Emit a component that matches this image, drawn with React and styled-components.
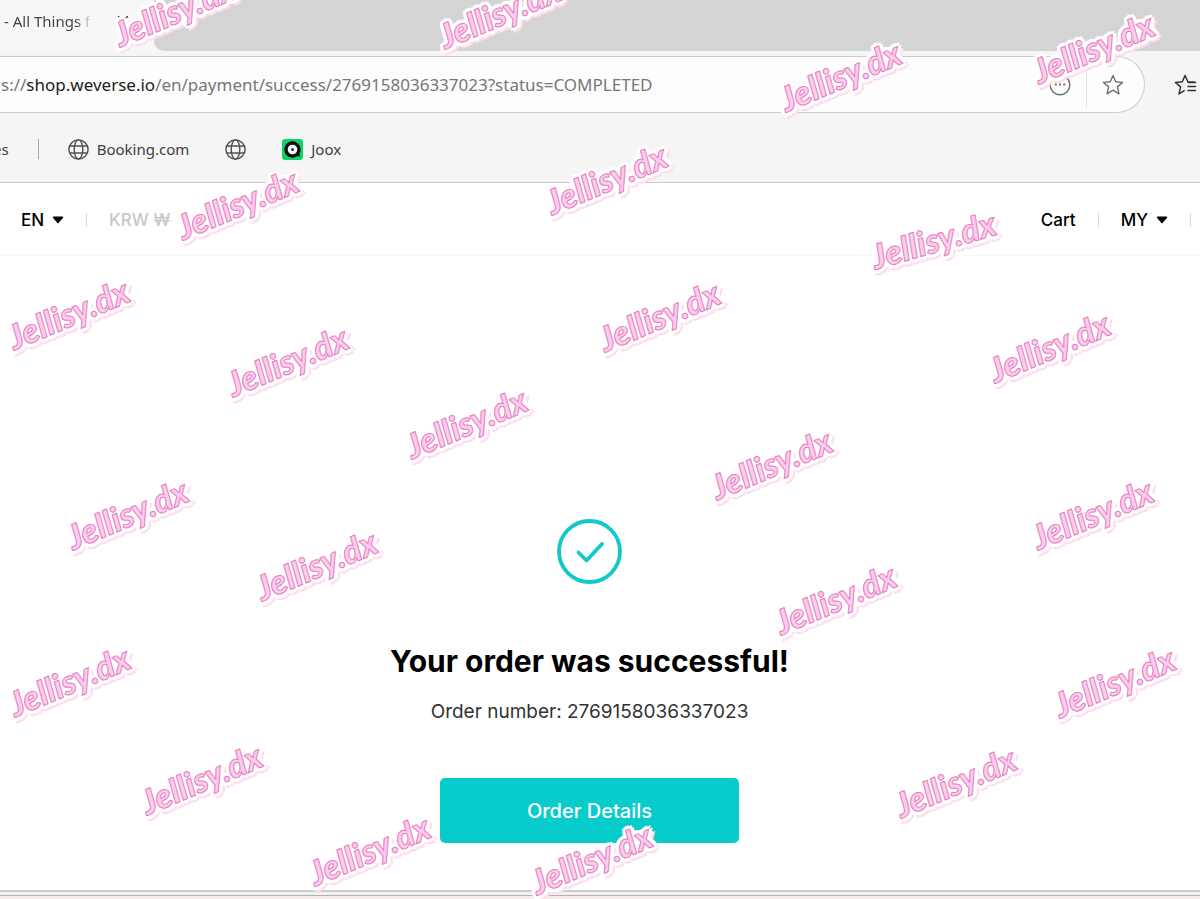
import React from 'react';
import styled, {createGlobalStyle} from 'styled-components';

const GlobalStyle = createGlobalStyle`
  * {
    box-sizing: border-box;
  }
  body {
    margin: 0;
    background: #fff;
    font-family: Inter, 'Liberation Sans', sans-serif;
    color: #000;
  }
  button {
    padding: 0;
    border: 0;
    background: none;
    font: inherit;
    color: inherit;
    cursor: pointer;
  }
  svg {
    display: block;
    flex: none;
  }
`;

const Page = styled.div`
  position: relative;
  display: flex;
  flex-direction: column;
  min-height: 100vh;
  overflow: hidden;
`;

const Row = styled.div`
  display: flex;
  align-items: center;
`;

const Browser = styled.div`
  background: #f5f5f5;
  border-bottom: 1px solid #ccc;
  font-family: 'Noto Sans', 'Open Sans', sans-serif;
  color: #404040;
`;

const TabStrip = styled.div`
  display: flex;
  height: 51px;
  background: #f7f7f7;
`;

const Tab = styled(Row)`
  width: 154px;
  flex: none;
  justify-content: space-between;
  padding: 0 26px 10px 4px;
  font-size: 15px;
`;

const TabTitle = styled.span`
  white-space: nowrap;
  background: linear-gradient(90deg, #404040 72px, #ddd 86px);
  background-clip: text;
  color: transparent;
`;

const EmptyStrip = styled.div`
  flex: 1;
  background: #d4d4d4;
  border-bottom-left-radius: 10px;
`;

const Toolbar = styled(Row)`
  padding-top: 5px;
  justify-content: space-between;
`;

const AddressBar = styled(Row)`
  flex: 1;
  height: 57px;
  border: 1px solid #ccc;
  border-left: 0;
  border-radius: 0 29px 29px 0;
  background: #fdfdfd;
`;

const Address = styled.div`
  flex: 1;
  padding-left: 1px;
  font-size: 17px;
  white-space: nowrap;
  color: #767676;
  > b {
    font-weight: 400;
    color: #222;
  }
`;

const MoreButton = styled.button`
  padding-right: 15px;
  color: #707070;
`;

const StarButton = styled.button`
  display: flex;
  align-items: center;
  height: 47px;
  padding: 0 20px 0 15px;
  border-left: 1px solid #e4e4e4;
  color: #707070;
`;

const FavouritesButton = styled.button`
  padding: 0 3px 0 29px;
  color: #333;
`;

const Bookmarks = styled.nav`
  display: flex;
  align-items: center;
  gap: 29px;
  height: 69px;
  padding-top: 3px;
  margin-left: -7px;
  font-size: 15px;
`;

const BookmarkList = styled(Row)`
  gap: 36px;
`;

const Bookmark = styled.a`
  display: flex;
  align-items: center;
  gap: 8px;
  line-height: 20px;
  color: inherit;
  text-decoration: none;
`;

const Divider = styled.span`
  width: 1px;
  height: ${({$tall}) => ($tall ? 20 : 14)}px;
  background: ${({$tall}) => ($tall ? '#a8a8a8' : '#d8d8d8')};
`;

const SiteHeader = styled.header`
  display: flex;
  align-items: center;
  justify-content: space-between;
  height: 73px;
  padding: 1px 9px 0 21px;
  border-bottom: 1px solid #f8f8f8;
  font-size: 17px;
  font-weight: 500;
`;

const HeaderGroup = styled(Row)`
  gap: 22px;
`;

const MenuButton = styled.button`
  display: flex;
  align-items: center;
  gap: 8px;
  color: ${({disabled}) => (disabled ? '#c8c8c8' : '#000')};
`;

const HeaderLink = styled.a`
  color: #000;
  text-decoration: none;
`;

const Main = styled.main`
  flex: 1;
  display: flex;
  flex-direction: column;
  align-items: center;
  padding: 263px 21px 47px 0;
`;

const Title = styled.h1`
  margin: 59px 0 0;
  font-size: 30px;
  line-height: 36px;
  font-weight: 700;
`;

const OrderNumber = styled.p`
  margin: 21px 0 0;
  font-size: 19px;
  line-height: 24px;
  color: #333;
`;

const DetailsButton = styled.button`
  && {
    width: 299px;
    height: 65px;
    margin-top: 54px;
    border-radius: 5px;
    background: #08cccc;
    color: #fff;
    font-size: 20px;
    font-weight: 500;
  }
`;

const WindowEdge = styled.div`
  height: 9px;
  border-top: 2px solid #ccc;
  background: linear-gradient(#f1f1f1 3px, #b8b0b0 3px, #b8b0b0 4px, #f7ecec 4px);
`;

const StickerLayer = styled.div`
  position: absolute;
  inset: 0;
  overflow: hidden;
  pointer-events: none;
`;

const Sticker = styled.span`
  position: absolute;
  left: ${({$x}) => $x}px;
  top: ${({$y}) => $y}px;
  transform: translate(-53%, -56%) rotate(${({$angle}) => $angle}deg);
  font: italic 900 34px/40px Lato, 'Liberation Sans', sans-serif;
  color: #ffcbee;
  -webkit-text-stroke: 1px #e27fc0;
  text-shadow:
    4px 0 #fff, -4px 0 #fff, 0 4px #fff, 0 -4px #fff,
    3px 3px #fff, -3px 3px #fff, 3px -3px #fff, -3px -3px #fff,
    -1px 6px #ffdcec, 2px 6px #ffdcec, 5px 4px #ffdcec;
`;

const stickers = [
    [178, 13], [503, 15], [844, 78], [1097, 50], [610, 181], [241, 206],
    [937, 242, -16], [72, 316], [291, 363], [663, 318], [1053, 349],
    [470, 425], [775, 466], [131, 516], [1096, 516], [320, 567],
    [839, 601], [73, 683], [1118, 684], [205, 781], [959, 784],
    [373, 852], [595, 861],
];

const Globe = () => (
    <svg width="21" height="21" viewBox="0 0 21 21" fill="none" stroke="#505050" strokeWidth="1.4">
        <circle cx="10.5" cy="10.5" r="9.6"/>
        <ellipse cx="10.5" cy="10.5" rx="4.3" ry="9.6"/>
        <path d="M1.7 7h17.6M1.7 14h17.6"/>
    </svg>
);

const JooxLogo = () => (
    <svg width="21" height="21" viewBox="0 0 21 21">
        <rect width="21" height="21" rx="3" fill="#12d267"/>
        <path d="M10.5 2.3a8.2 8.2 0 1 0 5 14.7l2.6.4-.7-2.7a8.2 8.2 0 0 0-6.9-12.4z" fill="#111"/>
        <circle cx="10.5" cy="10.5" r="4.8" fill="#fff"/>
        <circle cx="10.5" cy="10.5" r="1.5" fill="#333"/>
    </svg>
);

const Caret = () => (
    <svg width="12" height="8" viewBox="0 0 12 8" fill="currentColor">
        <path d="M1.5.5h9a.8.8 0 0 1 .6 1.3L6.6 6.9a.8.8 0 0 1-1.2 0L.9 1.8A.8.8 0 0 1 1.5.5z"/>
    </svg>
);

const CloseIcon = () => (
    <svg width="10" height="10" viewBox="0 0 10 10" stroke="#333" strokeWidth="1.4">
        <path d="M0 0l10 10M10 0L0 10"/>
    </svg>
);

const MoreIcon = () => (
    <svg width="22" height="22" viewBox="0 0 22 22" fill="none" stroke="currentColor" strokeWidth="1.4">
        <circle cx="11" cy="11" r="9.8"/>
        <path d="M5.8 10.5h2M10 10.5h2M14.2 10.5h2" strokeWidth="1.8"/>
    </svg>
);

const StarIcon = () => (
    <svg width="22" height="22" viewBox="0 0 22 22" fill="none" stroke="currentColor" strokeWidth="1.4" strokeLinejoin="round">
        <path d="M11 1.5l2.7 6.3 6.9.6-5.2 4.5 1.6 6.9-6-3.7-6 3.7 1.6-6.9L1.4 8.4l6.9-.6z"/>
    </svg>
);

const FavouritesIcon = () => (
    <svg width="23" height="22" viewBox="0 0 23 22" fill="none" stroke="currentColor" strokeWidth="1.5" strokeLinejoin="round" strokeLinecap="round">
        <path d="M20.5 8H14L11 1.5 8.3 7.8l-6.9.6 5.2 4.5L5 19.8l5.2-3.2M14 8.5h7.5M14 12.5h7.5M14 16.5h7.5"/>
    </svg>
);

const SuccessIcon = () => (
    <svg width="65" height="65" viewBox="0 0 65 65" fill="none" stroke="#12c9c9" strokeLinecap="round" strokeLinejoin="round">
        <circle cx="32.5" cy="32.5" r="30.5" strokeWidth="3.8"/>
        <path d="M21.5 33.5l8 8L45 25" strokeWidth="3.8"/>
    </svg>
);

const BrowserChrome = () => (
    <Browser>
        <TabStrip>
            <Tab>
                <TabTitle>{'- All Things f'}</TabTitle>
                <button aria-label="Close tab"><CloseIcon/></button>
            </Tab>
            <EmptyStrip/>
        </TabStrip>
        <Toolbar>
            <AddressBar>
                <Address role="textbox" aria-label="Address" tabIndex={0}>
                    s://<b>shop.weverse.io</b>/en/payment/success/2769158036337023?status=COMPLETED
                </Address>
                <MoreButton aria-label="More"><MoreIcon/></MoreButton>
                <StarButton aria-label="Add to favourites"><StarIcon/></StarButton>
            </AddressBar>
            <FavouritesButton aria-label="Favourites"><FavouritesIcon/></FavouritesButton>
        </Toolbar>
        <Bookmarks>
            <Bookmark href="#">es</Bookmark>
            <Divider $tall/>
            <BookmarkList>
                <Bookmark href="#"><Globe/>Booking.com</Bookmark>
                <Bookmark href="#" aria-label="Website"><Globe/></Bookmark>
                <Bookmark href="#"><JooxLogo/>Joox</Bookmark>
            </BookmarkList>
        </Bookmarks>
    </Browser>
);

const App = () => (
    <>
        <GlobalStyle/>
        <Page>
            <BrowserChrome/>
            <SiteHeader>
                <HeaderGroup>
                    <MenuButton>EN<Caret/></MenuButton>
                    <Divider/>
                    <MenuButton disabled>KRW ₩<Caret/></MenuButton>
                </HeaderGroup>
                <HeaderGroup>
                    <HeaderLink href="#">Cart</HeaderLink>
                    <Divider/>
                    <MenuButton>MY<Caret/></MenuButton>
                    <Divider/>
                </HeaderGroup>
            </SiteHeader>
            <Main>
                <SuccessIcon/>
                <Title>Your order was successful!</Title>
                <OrderNumber>Order number: 2769158036337023</OrderNumber>
                <DetailsButton>Order Details</DetailsButton>
            </Main>
            <WindowEdge/>
            <StickerLayer>
                {stickers.map(([x, y, angle = -23]) => (
                    <Sticker key={`${x}-${y}`} $x={x} $y={y} $angle={angle}>Jellisy.dx</Sticker>
                ))}
            </StickerLayer>
        </Page>
    </>
);

export default App;
